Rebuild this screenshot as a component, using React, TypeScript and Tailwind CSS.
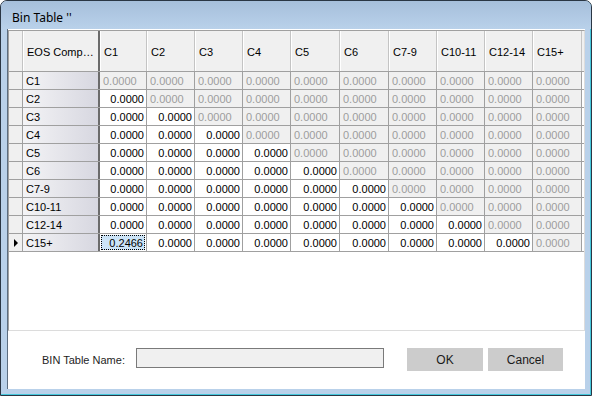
import React from 'react'

const columns = [
  { name: 'C1', w: 'w-[47px]' },
  { name: 'C2', w: 'w-[48px]' },
  { name: 'C3', w: 'w-[48px]' },
  { name: 'C4', w: 'w-[48px]' },
  { name: 'C5', w: 'w-[49px]' },
  { name: 'C6', w: 'w-[49px]' },
  { name: 'C7-9', w: 'w-[48px]' },
  { name: 'C10-11', w: 'w-[48px]' },
  { name: 'C12-14', w: 'w-[48px]' },
  { name: 'C15+', w: 'w-[49px]' },
]

const rows = ['C1', 'C2', 'C3', 'C4', 'C5', 'C6', 'C7-9', 'C10-11', 'C12-14', 'C15+']

function Cell({ row, col, width }: { row: number; col: number; width: string }) {
  const selected = row === 9 && col === 0
  const value = selected ? '0.2466' : '0.0000'

  if (col >= row) {
    // upper triangle is read-only
    return (
      <div
        className={`${width} h-full shrink-0 border-r border-[#a0a0a0] bg-[#f0f0f0] pl-[3px] pt-px flex items-center text-[#9d9d9d]`}
      >
        {value}
      </div>
    )
  }

  return (
    <div
      className={`${width} h-full shrink-0 border-r border-[#a0a0a0] flex items-center justify-end ${
        selected ? 'bg-white p-px' : 'bg-white pr-[2px] pt-px'
      }`}
    >
      {selected ? (
        <div className="w-full h-full bg-[#cce4f7] border border-dotted border-black flex items-center justify-end pr-px pt-px text-black">
          {value}
        </div>
      ) : (
        <span className="text-black">{value}</span>
      )}
    </div>
  )
}

export default function App() {
  return (
    <div className="w-[592px] h-[396px] bg-white overflow-hidden font-['Liberation_Sans',Arial,sans-serif] text-[11px] leading-none">
      <div className="w-full h-full flex flex-col rounded-t-[7px] border border-[#2a3644] bg-[#b9d1ea] px-[6px] pb-[6px] shadow-[inset_-1px_-1px_0_#45c8dc]">
        {/* Title bar */}
        <div className="h-[28px] -mx-[6px] px-[11px] pt-[5px] flex items-center rounded-t-[6px] bg-gradient-to-b from-[#a6bfdb] to-[#b9d1ea] font-['Noto_Sans',sans-serif] text-[12px] text-black">
          Bin Table ''
        </div>

        {/* Client area */}
        <div className="flex-1 flex flex-col bg-white border-l border-[#5c6d80]">
          {/* Grid */}
          <div className="mt-px h-[301px] w-[577px] border-l border-t border-[#a0a0a0] border-r border-r-[#dcdcdc] border-b border-b-[#dcdcdc] flex flex-col">
            {/* Header */}
            <div className="h-[41px] flex border-b border-[#a0a0a0] bg-[#f0f0f0]">
              <div className="w-[14px] h-full shrink-0 border-r border-[#c4c4c4]" />
              <div className="w-[77px] h-full shrink-0 border-r-2 border-[#6b6b6b] pl-[4px] pt-[3px] flex items-center text-black shadow-[inset_1px_0_0_#ffffff]">
                EOS Comp…
              </div>
              {columns.map((c) => (
                <div
                  key={c.name}
                  className={`${c.w} h-full shrink-0 border-r border-[#c4c4c4] pl-[4px] pt-[3px] flex items-center text-black shadow-[inset_1px_0_0_#ffffff]`}
                >
                  {c.name}
                </div>
              ))}
            </div>

            {/* Rows */}
            {rows.map((r, i) => (
              <div key={r} className="h-[18px] flex border-b border-[#a0a0a0]">
                <div className="w-[14px] h-full shrink-0 border-r border-[#a0a0a0] bg-[#f0f0f0] flex items-center justify-center">
                  {i === 9 && (
                    <svg width="4" height="8" viewBox="0 0 4 8">
                      <path d="M0 0 L4 4 L0 8 Z" fill="#000" />
                    </svg>
                  )}
                </div>
                <div className="w-[77px] h-full shrink-0 border-r-2 border-[#6b6b6b] pl-[3px] pt-px flex items-center text-black bg-gradient-to-r from-[#f4f4f6] to-[#d7d7e0]">
                  {r}
                </div>
                {columns.map((c, j) => (
                  <Cell key={c.name} row={i} col={j} width={c.w} />
                ))}
              </div>
            ))}
          </div>

          {/* Bottom bar */}
          <div className="flex items-start pt-[17px] pl-[34px]">
            <div className="w-[94px] mt-[7px] text-[#1e1e1e]">BIN Table Name:</div>
            <div className="w-[248px] h-[20px] border border-[#7a7a7a] bg-[#f0f0f0]" />
            <button className="ml-[23px] w-[76px] h-[23px] bg-[#cccccc] text-[12px] text-[#1a1a1a] flex items-center justify-center">
              OK
            </button>
            <button className="ml-[5px] w-[75px] h-[23px] bg-[#cccccc] text-[12px] text-[#1a1a1a] flex items-center justify-center">
              Cancel
            </button>
          </div>
        </div>
      </div>
    </div>
  )
}
